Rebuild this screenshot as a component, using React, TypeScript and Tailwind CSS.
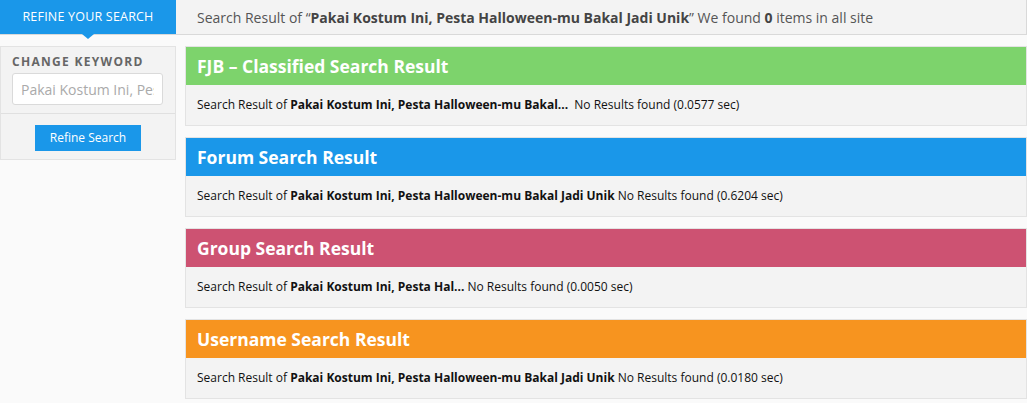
import React from "react";

const font = { fontFamily: '"Open Sans", "Noto Sans", sans-serif' };

type Sec = { title: string; color: string; kw: string; time: string; sep: string };

const sections: Sec[] = [
  { title: "FJB – Classified Search Result", color: "bg-[#7dd36c]", kw: "Pakai Kostum Ini, Pesta Halloween-mu Bakal...", time: "(0.0577 sec)", sep: "\u00a0 " },
  { title: "Forum Search Result", color: "bg-[#1a97e9]", kw: "Pakai Kostum Ini, Pesta Halloween-mu Bakal Jadi Unik", time: "(0.6204 sec)", sep: " " },
  { title: "Group Search Result", color: "bg-[#cd5272]", kw: "Pakai Kostum Ini, Pesta Hal...", time: "(0.0050 sec)", sep: " " },
  { title: "Username Search Result", color: "bg-[#f7941f]", kw: "Pakai Kostum Ini, Pesta Halloween-mu Bakal Jadi Unik", time: "(0.0180 sec)", sep: " " },
];

export default function App() {
  return (
    <div className="w-[1027px] h-[403px] bg-[#fafafa] overflow-hidden" style={font}>
      <div className="flex h-[35px] border-b border-r border-[#d9d9d9] bg-[#f3f3f3]">
        <div className="relative w-[176px] h-[34px] bg-[#1a97e9] flex items-center justify-center text-white text-[12.5px] tracking-[0.2px]">
          REFINE YOUR SEARCH
          <div className="absolute left-[82px] top-[34px] w-0 h-0 border-l-[6px] border-r-[6px] border-t-[5px] border-l-transparent border-r-transparent border-t-[#1a97e9]"></div>
        </div>
        <div className="pl-[21px] flex items-center text-[14px] text-[#555]">
          Search Result of “<b className="font-bold text-[#444]">Pakai Kostum Ini, Pesta Halloween-mu Bakal Jadi Unik</b>” We found&nbsp;<b className="font-bold text-[#444]">0</b>&nbsp;items in all site
        </div>
      </div>
      <div className="flex pt-[11px]">
        <div className="w-[176px] shrink-0">
          <div className="border border-[#e3e3e3] bg-[#f3f3f3]">
            <div className="px-[11px] pt-[7px] pb-[8px]">
              <div className="text-[12px] font-bold tracking-[1.3px] text-[#666] leading-[16px]">CHANGE KEYWORD</div>
              <input
                readOnly
                placeholder="Pakai Kostum Ini, Pesta Halloween-mu Bakal Jadi Unik"
                className="mt-[3px] w-[151px] h-[32px] border border-[#dadada] rounded-[3px] bg-white px-[8px] text-[14px] text-[#999] placeholder:text-[#aaa] outline-none"
                style={font}
              />
            </div>
            <div className="border-t border-[#e0e0e0] h-[46px] flex items-center justify-center">
              <button className="mt-[2px] w-[106px] h-[26px] bg-[#1a97e9] text-white text-[12px] leading-none" style={font}>
                Refine Search
              </button>
            </div>
          </div>
        </div>
        <div className="ml-[9px] flex-1 flex flex-col gap-[11px]">
          {sections.map((s) => (
            <div key={s.title} className="border border-[#e3e3e3] bg-[#f3f3f3]">
              <div className={`${s.color} h-[38px] flex items-center px-[11px] text-white font-bold text-[17.5px]`}>
                {s.title}
              </div>
              <div className="h-[40px] flex items-center px-[11px] text-[12px] text-[#111]">
                <span>
                  Search Result of <b className="font-bold">{s.kw}</b>{s.sep}No Results found {s.time}
                </span>
              </div>
            </div>
          ))}
        </div>
      </div>
    </div>
  );
}
